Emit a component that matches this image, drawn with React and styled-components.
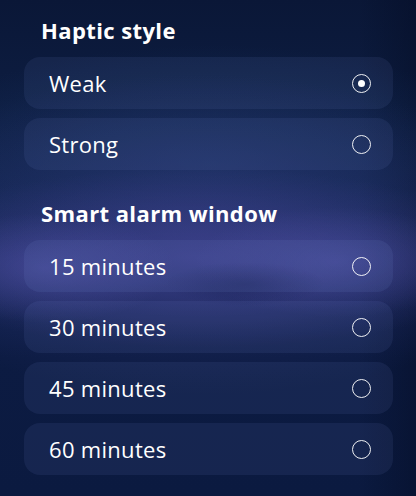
import React from "react";
import styled, { createGlobalStyle } from "styled-components";

const Global = createGlobalStyle`
  html, body { margin: 0; padding: 0; }
  body {
    width: 416px;
    height: 496px;
    overflow: hidden;
    font-family: "Open Sans", "Noto Sans", sans-serif;
    color: #fff;
    background: #0b1a3d;
  }
`;

const Screen = styled.div`
  width: 416px;
  height: 496px;
  box-sizing: border-box;
  padding: 18px 23px 0 24px;
  background:
    radial-gradient(ellipse 80px 22px at 245px 284px, rgba(14, 24, 70, 0.35), rgba(14, 24, 70, 0) 100%),
    radial-gradient(ellipse 130px 55px at 45px 268px, rgba(95, 92, 185, 0.42), rgba(95, 92, 185, 0) 100%),
    radial-gradient(ellipse 140px 55px at 335px 262px, rgba(95, 92, 185, 0.38), rgba(95, 92, 185, 0) 100%),
    radial-gradient(ellipse 320px 90px at 200px 258px, rgba(78, 76, 162, 0.55), rgba(78, 76, 162, 0) 100%),
    radial-gradient(ellipse 360px 160px at 200px 235px, rgba(50, 55, 125, 0.55), rgba(50, 55, 125, 0) 100%),
    radial-gradient(ellipse 320px 120px at 210px 165px, rgba(30, 60, 110, 0.5), rgba(30, 60, 110, 0) 100%),
    linear-gradient(90deg, rgba(0,0,0,0) 86%, rgba(4, 12, 35, 0.45) 100%),
    linear-gradient(180deg, #0a1737 0%, #0f2148 35%, #142656 52%, #0c1b42 72%, #0b1a40 100%);
`;

const Section = styled.section`
  & + & {
    margin-top: 31px;
  }
`;

const Title = styled.h2`
  margin: 0 0 15px 17px;
  font-size: 22px;
  line-height: 24px;
  font-weight: 700;
  letter-spacing: 0.4px;
`;

const List = styled.div`
  display: grid;
  gap: 9px;
`;

const Row = styled.div`
  height: 52px;
  box-sizing: border-box;
  padding: 0 22px 0 25px;
  border-radius: 16px;
  display: flex;
  align-items: center;
  justify-content: space-between;
  background: rgba(130, 160, 230, ${(p) => p.$alpha});
`;

const Label = styled.span`
  font-size: 22px;
  font-weight: 400;
  letter-spacing: 0.3px;
`;

const Radio = styled.span`
  width: 19px;
  height: 19px;
  box-sizing: border-box;
  border-radius: 50%;
  border: 1.5px solid rgba(255, 255, 255, 0.92);
  display: flex;
  align-items: center;
  justify-content: center;
  &::after {
    content: "";
    width: 7px;
    height: 7px;
    border-radius: 50%;
    background: #fff;
    display: ${(p) => (p.$checked ? "block" : "none")};
  }
`;

const Option = ({ label, checked, alpha = 0.09 }) => (
  <Row $alpha={alpha}>
    <Label>{label}</Label>
    <Radio $checked={checked} />
  </Row>
);

export default function App() {
  return (
    <>
      <Global />
      <Screen>
        <Section>
          <Title>Haptic style</Title>
          <List>
            <Option label="Weak" checked />
            <Option label="Strong" />
          </List>
        </Section>
        <Section>
          <Title>Smart alarm window</Title>
          <List>
            <Option label="15 minutes" alpha={0.1} />
            <Option label="30 minutes" />
            <Option label="45 minutes" />
            <Option label="60 minutes" />
          </List>
        </Section>
      </Screen>
    </>
  );
}
